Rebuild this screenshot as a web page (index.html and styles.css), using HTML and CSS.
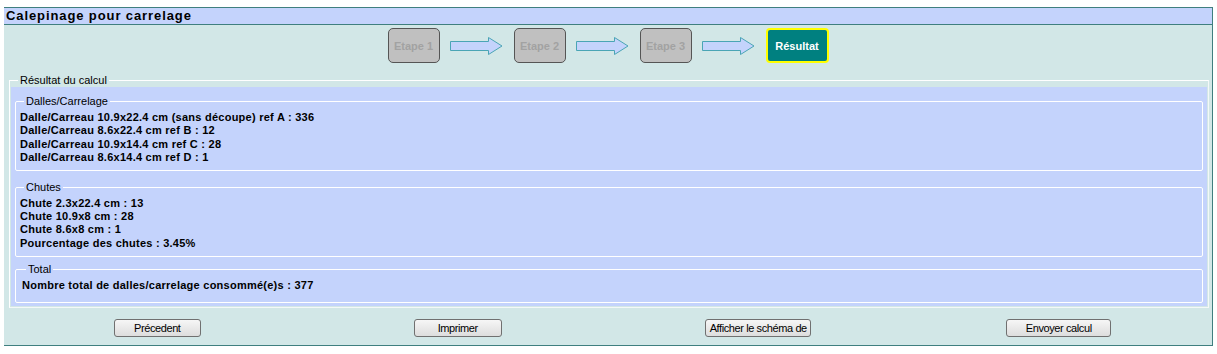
FILE: index.html
```html
<!DOCTYPE html>
<html lang="fr">
<head>
    <meta charset="UTF-8">
    <title>Calepinage pour carrelage</title>
    <link rel="stylesheet" href="styles.css">
</head>
<body>

<div id="main">
    <div class="title-bar">Calepinage pour carrelage</div>

    <div class="steps">
        <div class="step">Etape 1</div>
        <svg class="arrow" width="53" height="18" viewBox="0 0 53 18">
            <path d="M0.5 4.5 H38.5 V0.5 L52 9 L38.5 17.5 V13.5 H0.5 Z" />
        </svg>
        <div class="step">Etape 2</div>
        <svg class="arrow" width="53" height="18" viewBox="0 0 53 18">
            <path d="M0.5 4.5 H38.5 V0.5 L52 9 L38.5 17.5 V13.5 H0.5 Z" />
        </svg>
        <div class="step">Etape 3</div>
        <svg class="arrow" width="53" height="18" viewBox="0 0 53 18">
            <path d="M0.5 4.5 H38.5 V0.5 L52 9 L38.5 17.5 V13.5 H0.5 Z" />
        </svg>
        <div class="step current">Résultat</div>
    </div>

    <fieldset class="result">
        <legend>Résultat du calcul</legend>
        <div class="result-body">
            <fieldset class="group">
                <legend>Dalles/Carrelage</legend>
                <p>Dalle/Carreau 10.9x22.4 cm (sans découpe) ref A : 336</p>
                <p>Dalle/Carreau 8.6x22.4 cm ref B : 12</p>
                <p>Dalle/Carreau 10.9x14.4 cm ref C : 28</p>
                <p>Dalle/Carreau 8.6x14.4 cm ref D : 1</p>
            </fieldset>

            <fieldset class="group chutes">
                <legend>Chutes</legend>
                <p>Chute 2.3x22.4 cm : 13</p>
                <p>Chute 10.9x8 cm : 28</p>
                <p>Chute 8.6x8 cm : 1</p>
                <p>Pourcentage des chutes : 3.45%</p>
            </fieldset>

            <fieldset class="group total">
                <legend>Total</legend>
                <p>Nombre total de dalles/carrelage consommé(e)s : 377</p>
            </fieldset>
        </div>
    </fieldset>

    <div class="actions">
        <div class="cell"><button class="btn" style="width:87px">Précedent</button></div>
        <div class="cell"><button class="btn" style="width:88px">Imprimer</button></div>
        <div class="cell"><button class="btn" style="width:106px">Afficher le schéma de</button></div>
        <div class="cell"><button class="btn" style="width:105px">Envoyer calcul</button></div>
    </div>
</div>

</body>
</html>
```

FILE: styles.css
```css
body {
    margin: 0;
    background: #ffffff;
    font-family: 'Liberation Sans', Arial, sans-serif;
    font-size: 11px;
    color: #000;
}
#main {
    margin: 7px 0 0 4px;
    width: 1209px;
    height: 339px;
    box-sizing: border-box;
    background: #d2e7e7;
    border-top: 1px solid #3f7f7f;
    border-right: 1px solid #3f7f7f;
    border-bottom: 1px solid #3f7f7f;
}
.title-bar {
    background: #c4d3fc;
    border-bottom: 1px solid #3f7f7f;
    height: 16px;
    line-height: 16px;
    padding-left: 2px;
    font-size: 13px;
    font-weight: bold;
    letter-spacing: 0.9px;
}
.steps {
    display: flex;
    align-items: center;
    justify-content: center;
    margin-top: 3px;
    height: 35px;
}
.arrow {
    margin: 0 11px 0 10px;
}
.step {
    width: 52px;
    height: 35px;
    box-sizing: border-box;
    border: 1px solid #555;
    border-radius: 5px;
    background: #c0c0c0;
    color: #a2a2a2;
    font-weight: bold;
    display: flex;
    align-items: center;
    justify-content: center;
}
.step.current {
    width: 63px;
    border: 2px solid #ffff00;
    border-radius: 4px;
    background: #008080;
    color: #fff;
}
.arrow path {
    fill: #c4d3fc;
    stroke: #4aa5b5;
    stroke-width: 1;
}
.result {
    margin: 11px 3px 0 5px;
    padding: 0 1px 1px 1px;
    border: 1px solid #fff;
    border-right-color: #f4f8f8;
    border-bottom-color: #f4f8f8;
}
.result > legend {
    padding: 0 2px;
    margin-left: 7px;
    line-height: 13px;
}
.result-body {
    background: #c4d3fc;
    padding: 1px 4px 3px 4px;
}
.group {
    margin: 7px 0 0 0;
    padding: 3px 4px 5px 4px;
    border: 1px solid #fff;
    border-radius: 2px;
}
.group > legend {
    padding: 0 2px;
    margin-left: 4px;
    line-height: 13px;
}
.group p {
    margin: 0;
    font-weight: bold;
    line-height: 13.4px;
    letter-spacing: 0.25px;
}
.chutes {
    margin-top: 10px;
    padding-bottom: 6px;
}
.total {
    margin-top: 6px;
    padding: 3px 4px 9px 6px;
}
.actions {
    display: flex;
    margin-top: 11px;
    padding: 0 3px;
}
.cell {
    flex: 1;
    display: flex;
    justify-content: center;
}
.btn {
    height: 18px;
    padding: 0;
    font-family: 'Liberation Sans', Arial, sans-serif;
    font-size: 11px;
    letter-spacing: -0.4px;
    color: #000;
    background: linear-gradient(#f6f6f6, #dddddd);
    border: 1px solid #707070;
    border-radius: 3px;
    white-space: nowrap;
    overflow: hidden;
}
```
